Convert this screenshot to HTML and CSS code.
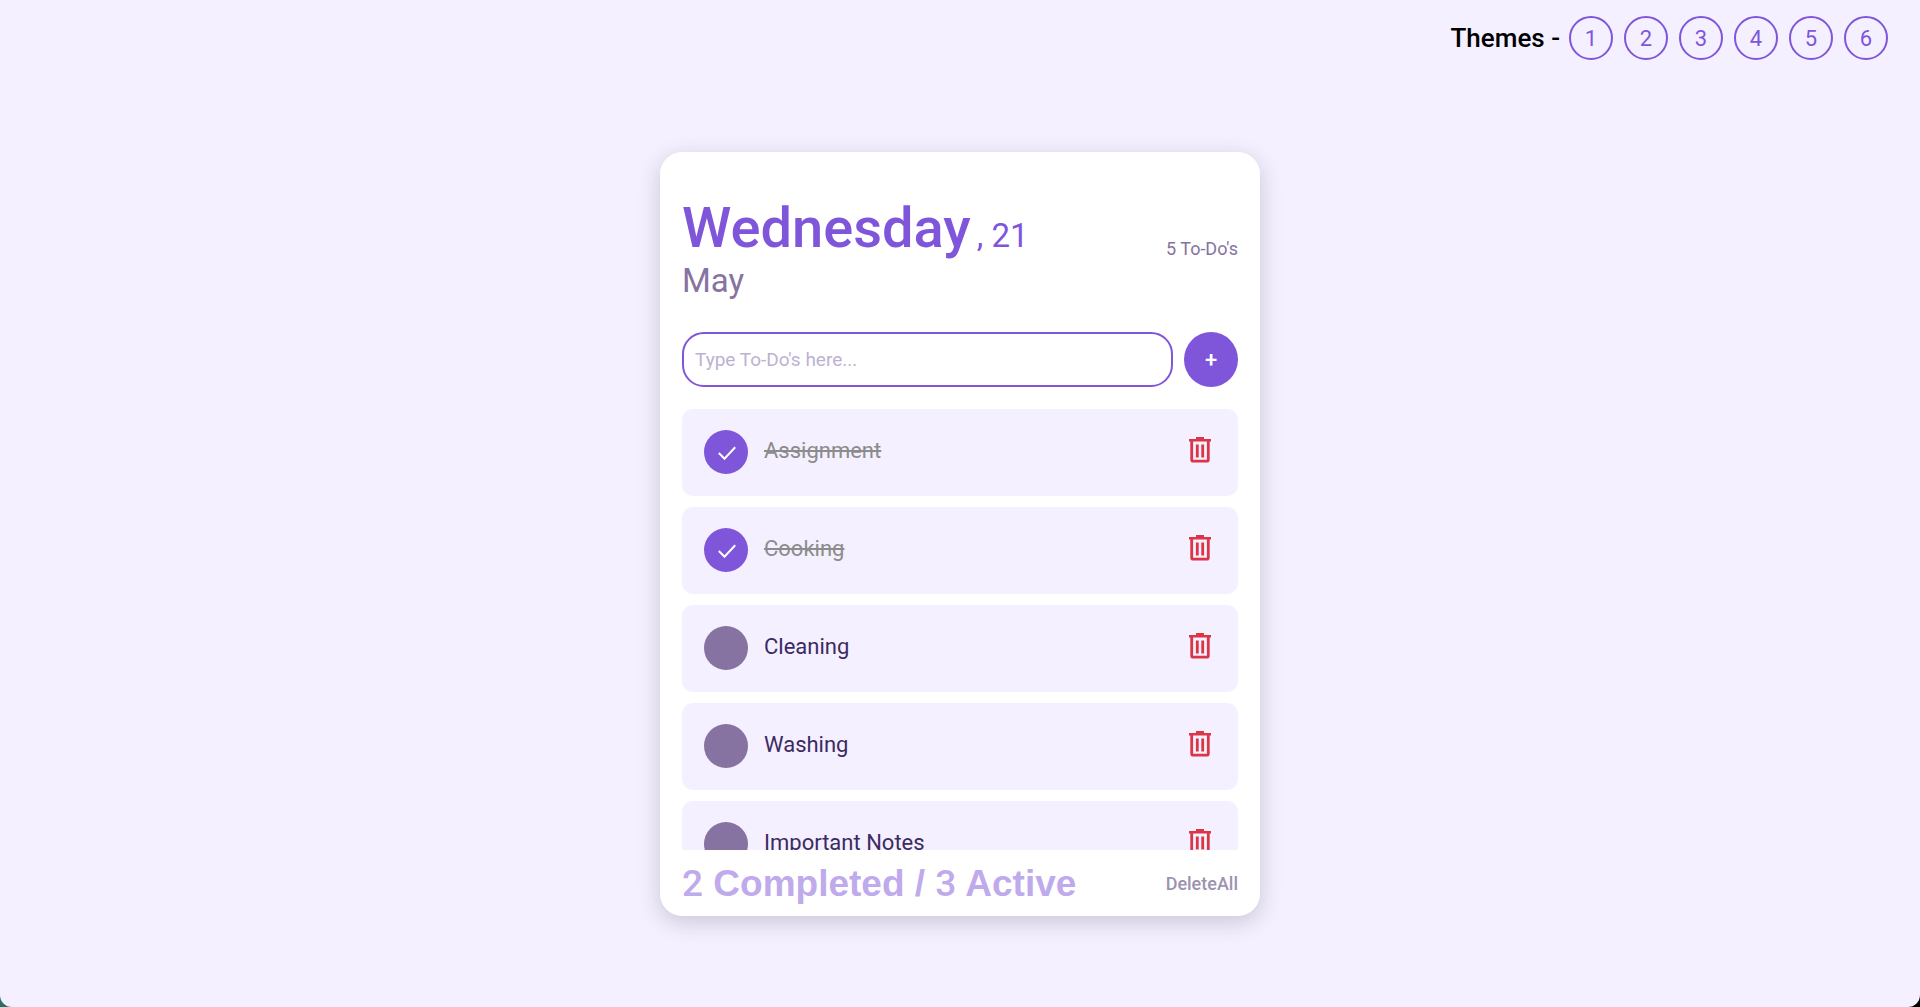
FILE: index.html
```html
<!DOCTYPE html>
<html lang="en">
<head>
<meta charset="utf-8">
<meta name="viewport" content="width=device-width, initial-scale=1">
<title>To-Do List</title>
<link rel="stylesheet" href="styles.css">
</head>
<body>
<svg class="sprite" aria-hidden="true">
  <symbol id="trash" viewBox="0 0 22 26">
    <path d="M7 1.2h8M0 3.3h22" fill="none" stroke="currentColor" stroke-width="2.6"/>
    <path d="M2.7 4v18.800q0 1.400 1.400 1.400h13.800q1.400 0 1.400-1.400V4" fill="none" stroke="currentColor" stroke-width="2.800"/>
    <path d="M8.300 7.500v13M13.700 7.500v13" fill="none" stroke="currentColor" stroke-width="2.800"/>
  </symbol>
  <symbol id="check" viewBox="0 0 18 14">
    <path d="M0.800 7l5.700 5.700L17.200 1.200" fill="none" stroke="currentColor" stroke-width="2"/>
  </symbol>
</svg>
<div class="page">
  <nav class="themes" aria-label="Themes">
    <span class="themes-label">Themes -</span>
    <div class="theme-list">
      <button class="theme" type="button">1</button>
      <button class="theme" type="button">2</button>
      <button class="theme" type="button">3</button>
      <button class="theme" type="button">4</button>
      <button class="theme" type="button">5</button>
      <button class="theme" type="button">6</button>
    </div>
  </nav>
  <main class="card">
    <header class="header">
      <div>
        <h1 class="date"><span class="weekday">Wednesday</span><span class="day">, 21</span></h1>
        <p class="month">May</p>
      </div>
      <p class="count">5 To-Do's</p>
    </header>
    <form class="add">
      <input class="add-input" type="text" placeholder="Type To-Do's here..." aria-label="New to-do">
      <button class="add-button" type="button">+</button>
    </form>
    <ul class="list">
      <li class="item">
        <button class="toggle done" type="button" aria-label="Mark active"><svg class="check"><use href="#check"/></svg></button>
        <span class="text struck">Assignment</span>
        <button class="delete" type="button" aria-label="Delete"><svg class="trash"><use href="#trash"/></svg></button>
      </li>
      <li class="item">
        <button class="toggle done" type="button" aria-label="Mark active"><svg class="check"><use href="#check"/></svg></button>
        <span class="text struck">Cooking</span>
        <button class="delete" type="button" aria-label="Delete"><svg class="trash"><use href="#trash"/></svg></button>
      </li>
      <li class="item">
        <button class="toggle" type="button" aria-label="Mark completed"></button>
        <span class="text">Cleaning</span>
        <button class="delete" type="button" aria-label="Delete"><svg class="trash"><use href="#trash"/></svg></button>
      </li>
      <li class="item">
        <button class="toggle" type="button" aria-label="Mark completed"></button>
        <span class="text">Washing</span>
        <button class="delete" type="button" aria-label="Delete"><svg class="trash"><use href="#trash"/></svg></button>
      </li>
      <li class="item">
        <button class="toggle" type="button" aria-label="Mark completed"></button>
        <span class="text">Important Notes</span>
        <button class="delete" type="button" aria-label="Delete"><svg class="trash"><use href="#trash"/></svg></button>
      </li>
    </ul>
    <footer class="footer">
      <p class="summary"><span class="number">2</span> Completed / <span class="number">3</span> Active</p>
      <button class="delete-all" type="button">DeleteAll</button>
    </footer>
  </main>
</div>
</body>
</html>
```

FILE: styles.css
```css
:root {
  --primary: #7f56d9;
  --muted: #8673a1;
  --tint: #f4f0ff;
  --ink: #3c2a63;
}

* {
  box-sizing: border-box;
  margin: 0;
  padding: 0;
}

html {
  background: linear-gradient(to right, #28705f 50%, #000 50%);
}

body {
  font-family: Roboto, sans-serif;
}

button {
  font: inherit;
  border: 0;
  background: none;
  cursor: pointer;
}

.sprite {
  display: none;
}

.page {
  display: flex;
  flex-direction: column;
  align-items: center;
  min-height: 100vh;
  padding-bottom: 64px;
  border-radius: 0 0 12px 12px;
  background: var(--tint);
}

.themes {
  display: flex;
  align-items: center;
  align-self: flex-end;
  gap: 9px;
  padding: 16px 32px 0;
}

.themes-label {
  color: #000;
  font-size: 26px;
  font-weight: 500;
}

.theme-list {
  display: flex;
  gap: 11px;
}

.theme {
  width: 44px;
  height: 44px;
  border: 2px solid var(--primary);
  border-radius: 50%;
  color: var(--primary);
  font-size: 22px;
}

.card {
  width: 100%;
  max-width: 600px;
  margin-top: 92px;
  padding: 44px 22px 0;
  border-radius: 22px;
  background: #fff;
  box-shadow: 0 6px 22px rgba(40, 30, 60, 0.2);
}

.header {
  display: flex;
  align-items: center;
  justify-content: space-between;
}

.date {
  display: flex;
  align-items: baseline;
  color: var(--primary);
  font-weight: 400;
  line-height: 64px;
}

.weekday {
  font-size: 56px;
  font-weight: 500;
}

.day {
  margin-left: 6px;
  font-size: 33px;
  line-height: 1;
}

.month {
  color: var(--muted);
  font-size: 33px;
  line-height: 41px;
}

.count {
  color: var(--muted);
  font-size: 18px;
}

.add {
  display: flex;
  gap: 11px;
  margin-top: 31px;
}

.add-input {
  flex: 1;
  min-width: 0;
  height: 55px;
  padding: 0 11px;
  border: 2px solid var(--primary);
  border-radius: 22px;
  font: inherit;
  font-size: 19px;
}

.add-input::placeholder {
  color: #bcb2d0;
}

.add-button {
  width: 54px;
  height: 55px;
  border-radius: 50%;
  background: var(--primary);
  color: #fff;
  font-size: 22px;
  font-weight: 500;
}

.list {
  display: flex;
  flex-direction: column;
  gap: 11px;
  height: 441px;
  margin-top: 22px;
  overflow-y: auto;
  scrollbar-width: none;
  list-style: none;
}

.item {
  display: flex;
  flex: none;
  align-items: flex-start;
  padding: 21px 27px 22px 22px;
  border-radius: 11px;
  background: var(--tint);
}

.toggle {
  display: grid;
  place-items: center;
  width: 44px;
  height: 44px;
  border-radius: 50%;
  background: var(--muted);
}

.toggle.done {
  background: var(--primary);
}

.check {
  width: 18px;
  height: 14px;
  margin: 2px 0 0 2px;
  color: #fff;
}

.text {
  flex: 1;
  padding-left: 16px;
  color: var(--ink);
  font-size: 22px;
  line-height: 42px;
}

.struck {
  color: #8c8c8c;
  text-decoration: line-through;
}

.delete {
  padding-top: 7px;
  color: #dc3545;
}

.trash {
  display: block;
  width: 22px;
  height: 26px;
}

.footer {
  display: flex;
  align-items: center;
  justify-content: space-between;
  height: 66px;
}

.summary {
  color: #bfaaec;
  font-family: "Liberation Sans", Arial, sans-serif;
  font-size: 37px;
  font-weight: 700;
}

.number {
  font-family: Roboto, sans-serif;
  font-weight: 500;
}

.delete-all {
  color: #9c93b1;
  font-size: 18px;
  font-weight: 500;
}
```
